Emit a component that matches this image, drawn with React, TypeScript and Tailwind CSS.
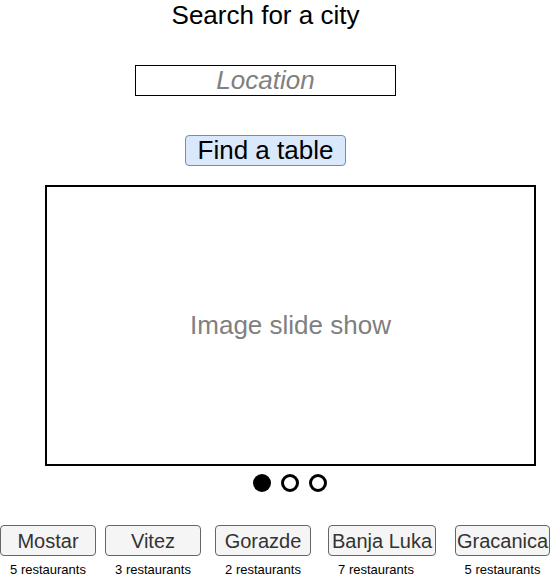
import React from "react";

const cities = [
  { name: "Mostar", count: "5 restaurants", w: "w-[96px]", ml: "ml-0", lbl: "" },
  { name: "Vitez", count: "3 restaurants", w: "w-[96px]", ml: "ml-[9px]", lbl: "" },
  { name: "Gorazde", count: "2 restaurants", w: "w-[96px]", ml: "ml-[14px]", lbl: "" },
  { name: "Banja Luka", count: "7 restaurants", w: "w-[108px]", ml: "ml-[17px]", lbl: "mr-[12px]" },
  { name: "Gracanica", count: "5 restaurants", w: "w-[95px]", ml: "ml-[19px]", lbl: "" },
];

export default function App() {
  return (
    <div
      className="w-[551px] h-[586px] bg-white overflow-hidden"
      style={{ fontFamily: '"Liberation Sans", Arial, sans-serif' }}
    >
      <div className="w-[531px] flex flex-col items-center">
        <div className="text-[26px] leading-[30px] text-black whitespace-nowrap">
          Search for a city
        </div>
        <div className="mt-[35px] w-[261px] h-[31px] pb-[2px] border border-black flex items-center justify-center text-[26px] leading-[30px] italic text-[#808080]">
          Location
        </div>
        <div className="mt-[39px] w-[161px] h-[31px] pb-[2px] border border-[#6c8ebf] bg-[#dae8fc] rounded-[4px] flex items-center justify-center text-[26px] leading-[30px] text-black whitespace-nowrap">
          Find a table
        </div>
      </div>
      <div className="mt-[19px] ml-[45px] w-[491px] h-[281px] pb-[2px] border-2 border-black flex items-center justify-center text-[26px] leading-[30px] text-[#808080]">
        Image slide show
      </div>
      <div className="mt-[8px] ml-[44px] w-[491px] flex justify-center gap-[10px]">
        <div className="w-[18px] h-[18px] rounded-full bg-black" />
        <div className="w-[18px] h-[18px] rounded-full border-[3px] border-black bg-white" />
        <div className="w-[18px] h-[18px] rounded-full border-[3px] border-black bg-white" />
      </div>
      <div className="mt-[33px] flex">
        {cities.map((c) => (
          <div key={c.name} className={`${c.ml} ${c.w} flex flex-col items-center`}>
            <div className={`${c.w} h-[31px] pt-[1px] border border-[#666666] bg-[#f5f5f5] rounded-[4px] flex items-center justify-center text-[20px] leading-[23px] text-[#333333] whitespace-nowrap`}>
              {c.name}
            </div>
            <div className={`mt-[6px] text-[13px] leading-[15px] text-black whitespace-nowrap ${c.lbl}`}>
              {c.count}
            </div>
          </div>
        ))}
      </div>
    </div>
  );
}
